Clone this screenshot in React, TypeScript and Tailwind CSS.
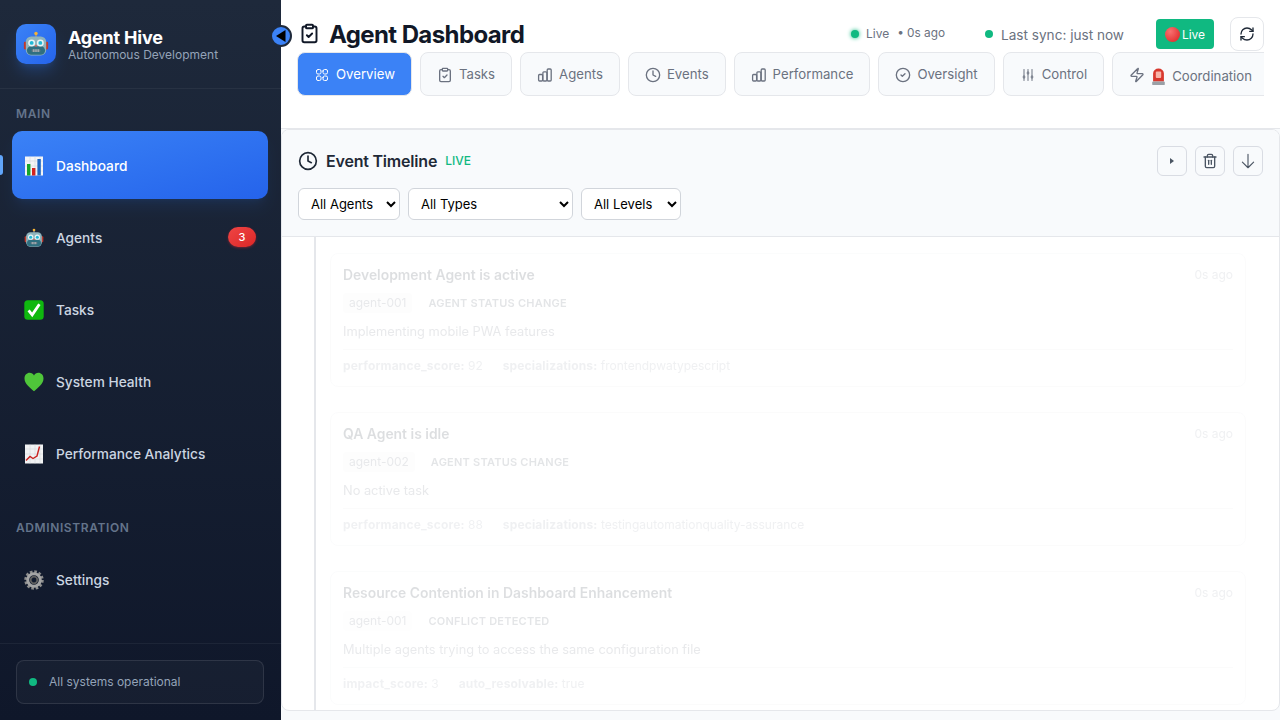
import { CircleCheck, ClipboardCheck, Clock, RefreshCw, Trash2, Zap } from "lucide-react";
import {
  HiOutlineAdjustmentsVertical,
  HiOutlineArrowDown,
  HiOutlineSquares2X2,
} from "react-icons/hi2";

// emoji drawn by hand, the sandbox has no colour emoji font
function Robot({ className }: { className: string }) {
  return (
    <svg viewBox="0 0 24 24" className={className}>
      <rect x="11.2" y="2.8" width="1.6" height="3" fill="#8a8f98" />
      <circle cx="12" cy="2.4" r="1.6" fill="#f5b335" />
      <rect x="0.8" y="10" width="3" height="7" rx="1" fill="#c0392b" />
      <rect x="20.2" y="10" width="3" height="7" rx="1" fill="#c0392b" />
      <rect x="2.6" y="5" width="18.8" height="17.5" rx="5" fill="#8fb4bd" />
      <rect x="3.6" y="14" width="16.8" height="8" rx="4" fill="#2f6f80" />
      <circle cx="8" cy="11" r="3.2" fill="#e8f3f5" />
      <circle cx="16" cy="11" r="3.2" fill="#e8f3f5" />
      <circle cx="8" cy="11" r="1.8" fill="#22b8d6" />
      <circle cx="16" cy="11" r="1.8" fill="#22b8d6" />
      <path d="M12 12.4l1.3 2h-2.6z" fill="#e0564a" />
      <rect x="8" y="16.8" width="8" height="2.6" rx="1" fill="#6b7c85" />
      <path d="M10 16.8v2.6M12 16.8v2.6M14 16.8v2.6" stroke="#c9d3d8" strokeWidth="0.7" />
    </svg>
  );
}

function BarsEmoji() {
  return (
    <svg viewBox="0 0 20 20" className="size-5">
      <rect x="1" y="0.5" width="18" height="19" fill="#f4f5f6" />
      <path d="M1 5h18M1 10h18M1 15h18M6 .5v19M11 .5v19M16 .5v19" stroke="#cfd3d8" strokeWidth="0.5" />
      <rect x="3" y="8" width="3.4" height="11.5" fill="#16a52b" />
      <rect x="8" y="12" width="3.4" height="7.5" fill="#d3231f" />
      <rect x="13.4" y="3" width="3.4" height="16.5" fill="#1f66c2" />
    </svg>
  );
}

function CheckEmoji() {
  return (
    <svg viewBox="0 0 20 20" className="size-5">
      <rect x="0.3" y="0.3" width="19.4" height="19.4" rx="3.5" fill="#0fb80f" />
      <path d="M4.6 10.4l3.6 4.4L15.4 4.2" fill="none" stroke="#fff" strokeWidth="2.8" />
    </svg>
  );
}

function HeartEmoji() {
  return (
    <svg viewBox="0 0 20 20" className="size-5">
      <path
        d="M10 19.3C6 15.6.5 11.8.5 6.4.5 3 3 .8 5.6.8c2 0 3.5 1 4.4 2.8C10.900 1.800 12.400.8 14.400.8 17 .8 19.500 3 19.500 6.400c0 5.400-5.500 9.200-9.500 12.900z"
        fill="#4fc63a"
      />
    </svg>
  );
}

function TrendEmoji() {
  return (
    <svg viewBox="0 0 20 20" className="size-5">
      <rect x="1" y="0.5" width="18" height="19" fill="#f2f3f4" />
      <path d="M1 5h18M1 10h18M1 15h18M6 .5v19M11 .5v19M16 .5v19" stroke="#cfd3d8" strokeWidth="0.5" />
      <path d="M2 16.500l4-4 3 2 4-2.500 2.500-9.500" fill="none" stroke="#c9211e" strokeWidth="1.400" />
    </svg>
  );
}

function GearEmoji() {
  return (
    <svg viewBox="0 0 20 20" className="size-5">
      <circle cx="10" cy="10" r="7.500" fill="none" stroke="#8d8d8d" strokeWidth="4.500" strokeDasharray="2.300 1.630" />
      <circle cx="10" cy="10" r="6.300" fill="none" stroke="#a5a5a5" strokeWidth="3" />
      <circle cx="10" cy="10" r="3.300" fill="none" stroke="#5f5f5f" strokeWidth="1.800" />
    </svg>
  );
}

function SirenEmoji() {
  return (
    <svg viewBox="0 0 16 20" className="h-[18px] w-[15px]">
      <path d="M2 15V6a6 5.500 0 0 1 12 0v9z" fill="#d8382e" />
      <rect x="5" y="4" width="6" height="7" rx="1" fill="#f7b4a8" />
      <rect x="1" y="15" width="14" height="4" rx="1" fill="#9aa0a6" />
    </svg>
  );
}

function BarsIcon() {
  return (
    <svg viewBox="0 0 16 16" className="size-4" fill="none" stroke="currentColor" strokeWidth="1.3">
      <rect x="1.600" y="7.500" width="4" height="6.500" rx="1" />
      <rect x="5.900" y="4.800" width="4" height="9.200" rx="1" />
      <rect x="10.200" y="2" width="4" height="12" rx="1" />
    </svg>
  );
}

const navMain = [
  { label: "Dashboard", icon: <BarsEmoji />, active: true },
  { label: "Agents", icon: <Robot className="size-5" />, badge: "3" },
  { label: "Tasks", icon: <CheckEmoji /> },
  { label: "System Health", icon: <HeartEmoji /> },
  { label: "Performance Analytics", icon: <TrendEmoji /> },
];

const tabClass =
  "flex h-11 shrink-0 items-center gap-1.5 rounded-lg border border-[#e5e7eb] bg-[#f8fafc] pt-0.5 px-4 text-[13.2px] text-[#6b7280]";

const events = [
  {
    title: "Development Agent is active",
    agent: "agent-001",
    type: "AGENT STATUS CHANGE",
    text: "Implementing mobile PWA features",
    meta: [
      ["performance_score:", "92"],
      ["specializations:", "frontendpwatypescript"],
    ],
  },
  {
    title: "QA Agent is idle",
    agent: "agent-002",
    type: "AGENT STATUS CHANGE",
    text: "No active task",
    meta: [
      ["performance_score:", "88"],
      ["specializations:", "testingautomationquality-assurance"],
    ],
  },
  {
    title: "Resource Contention in Dashboard Enhancement",
    agent: "agent-001",
    type: "CONFLICT DETECTED",
    text: "Multiple agents trying to access the same configuration file",
    meta: [
      ["impact_score:", "3"],
      ["auto_resolvable:", "true"],
    ],
  },
];

function NavItem({ item }: { item: (typeof navMain)[number] }) {
  return (
    <div
      className={`relative flex h-[68px] items-center gap-3 rounded-[10px] px-3 pt-0.5 text-[13.7px] font-[450] ${
        item.active
          ? "bg-gradient-to-br from-[#3b82f6] to-[#2563eb] text-white shadow-lg shadow-blue-500/10"
          : "text-[#cbd5e1]"
      }`}
    >
      {item.active && <span className="absolute -left-3 top-6 h-5 w-[3px] rounded-r bg-[#60a5fa]" />}
      {item.icon}
      <span>{item.label}</span>
      {item.badge && (
        <span className="ml-auto flex h-5 w-7 -translate-y-px items-center justify-center rounded-full bg-gradient-to-br from-[#ef4444] to-[#dc2626] text-[11px] font-medium text-white shadow-sm shadow-red-500/30">
          {item.badge}
        </span>
      )}
    </div>
  );
}

function Sidebar() {
  return (
    <aside className="flex h-screen w-[281px] shrink-0 flex-col bg-gradient-to-b from-[#1e293b] to-[#0f172a]">
      <div className="flex h-[89px] items-center gap-3 border-b border-white/5 px-4">
        <div className="flex size-10 items-center justify-center rounded-[10px] bg-gradient-to-br from-[#3b82f6] to-[#2563eb] shadow-lg shadow-blue-500/25">
          <Robot className="size-[26px]" />
        </div>
        <div className="pt-px">
          <div className="text-lg leading-[22px] font-bold tracking-[-0.2px] text-white">Agent Hive</div>
          <div className="-mt-px text-xs leading-[14px] text-[#94a3b8]">Autonomous Development</div>
        </div>
      </div>
      <div className="flex-1 pr-[13px] pl-3">
        <div className="mt-[17px] mb-[10px] px-1 text-xs leading-[15px] font-semibold tracking-[0.05em] text-[#64748b]">
          MAIN
        </div>
        <nav className="flex flex-col gap-1">
          {navMain.map((item) => (
            <NavItem key={item.label} item={item} />
          ))}
        </nav>
        <div className="mt-[33px] mb-[10px] px-1 text-xs leading-[15px] font-semibold tracking-[0.05em] text-[#64748b]">
          ADMINISTRATION
        </div>
        <NavItem item={{ label: "Settings", icon: <GearEmoji /> }} />
      </div>
      <div className="border-t border-white/5 pt-4 pr-[17px] pb-4 pl-4">
        <div className="flex h-11 items-center gap-3 rounded-lg border border-white/10 bg-white/[0.03] px-3 text-xs text-[#94a3b8]">
          <span className="size-2 rounded-full bg-[#10b981]" />
          All systems operational
        </div>
      </div>
    </aside>
  );
}

function Header() {
  return (
    <header className="h-[129px] border-b border-[#e5e7eb] bg-white px-4">
      <div className="flex h-[52px] items-center justify-between pt-4">
        <div className="flex items-center">
          <ClipboardCheck className="ml-0.5 size-[21px] -translate-y-px text-[#111827]" strokeWidth={2.2} />
          <h1 className="ml-[9px] translate-y-px text-2xl font-bold tracking-[-0.6px] text-[#111827]">
            Agent Dashboard
          </h1>
        </div>
        <div className="flex items-center text-[#6b7280]">
          <span className="size-2 rounded-full bg-[#10b981] shadow-[0_0_4px_#10b981]" />
          <span className="ml-[7px] text-xs">Live</span>
          <span className="ml-2 text-[11.8px]">• 0s ago</span>
          <span className="ml-10 size-2 rounded-full bg-[#10b981]" />
          <span className="ml-2 pt-0.5 text-[13.6px]">Last sync: just now</span>
          <button className="ml-8 flex h-[30px] w-[58px] items-center justify-center gap-0.5 rounded bg-[#10b981] pt-px text-xs text-white">
            <span className="size-[15px] rounded-full bg-radial-[at_35%_30%] from-[#f87171] to-[#dc1f1f]" />
            Live
          </button>
          <button className="ml-4 flex size-[34px] items-center justify-center rounded-lg border border-[#e5e7eb] bg-white text-[#1f2937]">
            <RefreshCw className="size-4" />
          </button>
        </div>
      </div>
      <div className="flex gap-2 overflow-hidden">
        <div className={`${tabClass} border-[#3b82f6] !bg-[#3b82f6] !text-white`}>
          <HiOutlineSquares2X2 className="size-4" />
          Overview
        </div>
        <div className={tabClass}>
          <ClipboardCheck className="size-4" />
          Tasks
        </div>
        <div className={tabClass}>
          <BarsIcon />
          Agents
        </div>
        <div className={tabClass}>
          <Clock className="size-4" />
          Events
        </div>
        <div className={tabClass}>
          <BarsIcon />
          Performance
        </div>
        <div className={tabClass}>
          <CircleCheck className="size-4" />
          Oversight
        </div>
        <div className={tabClass}>
          <HiOutlineAdjustmentsVertical className="size-4" />
          Control
        </div>
        <div className={tabClass}>
          <Zap className="size-4" />
          <span className="flex items-center gap-1.5 pt-1 pr-4">
            <SirenEmoji />
            Coordination
          </span>
        </div>
      </div>
    </header>
  );
}

function IconButton({ children }: { children: React.ReactNode }) {
  return (
    <button className="flex size-[30px] items-center justify-center rounded-md border border-[#d9dce3] bg-[#f8fafc] text-[#4b5563]">
      {children}
    </button>
  );
}

function EventCard({ event }: { event: (typeof events)[number] }) {
  return (
    <div className="h-[134px] rounded-lg border border-[#e5e7eb] bg-white px-3 pt-[11px]">
      <div className="flex items-center justify-between">
        <div className="text-[13.9px] leading-5 font-semibold text-[#1f2937]">{event.title}</div>
        <div className="text-xs text-[#9ca3af]">0s ago</div>
      </div>
      <div className="mt-[6px] flex h-6 items-center gap-4 text-[#4b5563]">
        <span className="rounded bg-[#f3f4f6] px-1.5 py-0.5 text-xs text-[#6b7280]">{event.agent}</span>
        <span className="text-[11px] font-semibold tracking-[0.02em]">{event.type}</span>
      </div>
      <div className="mt-[7px] text-[12.8px] leading-5 text-[#6b7280]">{event.text}</div>
      <div className="mt-[7px] flex gap-5 border-t border-[#e5e7eb] pt-[7px] text-xs leading-[18px] text-[#9ca3af]">
        {event.meta.map(([key, value]) => (
          <span key={key}>
            <b className="font-bold tracking-[0.15px]">{key}</b> {value}
          </span>
        ))}
      </div>
    </div>
  );
}

function Timeline() {
  return (
    <section className="flex h-[582px] flex-col overflow-hidden rounded-lg border border-[#e5e7eb] bg-white">
      <div className="h-[107px] shrink-0 border-b border-[#e5e7eb] bg-[#f8fafc] px-4 pt-4">
        <div className="flex items-center">
          <Clock className="size-5 text-[#1f2937]" />
          <h2 className="ml-2 text-base font-semibold tracking-[-0.2px] text-[#1f2937]">Event Timeline</h2>
          <span className="ml-2 text-xs font-medium text-[#10b981]">LIVE</span>
          <div className="ml-auto flex gap-2">
            <IconButton>
              <svg viewBox="0 0 6 8" className="h-2 w-1.5 fill-current">
                <path d="M1 1l4 3-4 3z" />
              </svg>
            </IconButton>
            <IconButton>
              <Trash2 className="size-4" />
            </IconButton>
            <IconButton>
              <HiOutlineArrowDown className="size-[18px]" />
            </IconButton>
          </div>
        </div>
        <div className="mt-3 flex gap-2 text-[13px] text-black">
          <select className="h-8 w-[102px] rounded-md border border-[#d1d5db] bg-white px-2">
            <option>All Agents</option>
          </select>
          <select className="h-8 w-[165px] rounded-md border border-[#d1d5db] bg-white px-2">
            <option>All Types</option>
          </select>
          <select className="h-8 w-[100px] rounded-md border border-[#d1d5db] bg-white px-2">
            <option>All Levels</option>
          </select>
        </div>
      </div>
      <div className="ml-8 flex flex-1 border-l-2 border-[#e5e7eb]">
        <div className="mr-[33px] ml-[14px] flex flex-1 flex-col gap-[25px] pt-4 opacity-[0.15] blur-[0.5px]">
          {events.map((event) => (
            <EventCard key={event.title} event={event} />
          ))}
        </div>
      </div>
    </section>
  );
}

export default function App() {
  return (
    <div className="relative flex h-screen overflow-hidden bg-[#f8fafc] font-['Inter',sans-serif]">
      <Sidebar />
      <main className="min-w-0 flex-1">
        <Header />
        <Timeline />
      </main>
      <button className="absolute top-[25px] left-[270px] flex size-[22px] items-center justify-center rounded-full border-2 border-[#1e293b] bg-[#3b82f6]">
        <svg viewBox="0 0 10 12" className="h-3 w-2.5">
          <path d="M9.500 0v12L0 6z" fill="#000" />
        </svg>
      </button>
    </div>
  );
}
